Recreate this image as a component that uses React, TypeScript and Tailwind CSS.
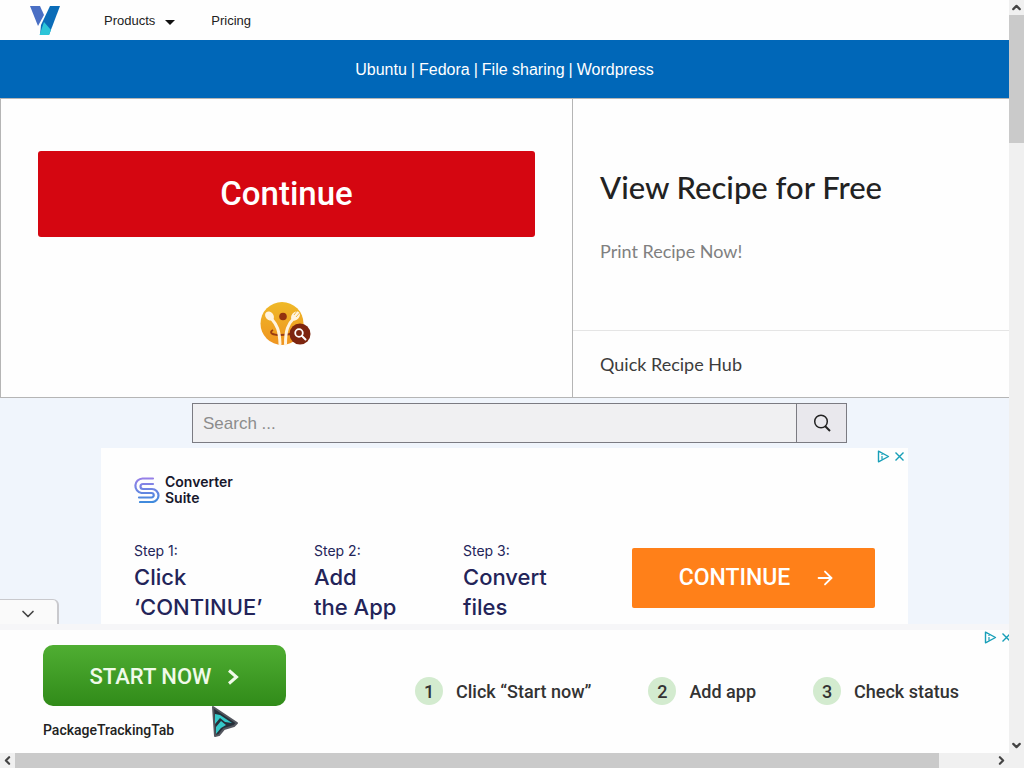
import { ArrowRight, ChevronDown, ChevronLeft, ChevronRight, ChevronUp } from "lucide-react";

const converterSteps = [
  { id: 1, label: "Step 1:", lines: ["Click", "‘CONTINUE’"], width: "w-[180px]" },
  { id: 2, label: "Step 2:", lines: ["Add", "the App"], width: "w-[149px]" },
  { id: 3, label: "Step 3:", lines: ["Convert", "files"], width: "w-[169px]" },
];

const trackingSteps = [
  { id: 1, text: "Click “Start now”" },
  { id: 2, text: "Add app" },
  { id: 3, text: "Check status" },
];

function Logo() {
  return (
    <svg viewBox="0 0 30 29" className="w-[30px] h-[29px]" aria-hidden="true">
      <path d="M0 0h10l4 9-6 11z" fill="#4a6fc4" />
      <path d="M20 0h10L19 29H10l1-10z" fill="#0a6cb8" />
      <path d="M14 16l7 8-2 5H9.500z" fill="#2cc5d8" />
    </svg>
  );
}

function RecipeIcon() {
  return (
    <svg viewBox="0 0 52 46" className="w-[52px] h-[46px]" aria-hidden="true">
      <defs>
        <linearGradient id="plate" x1="0" y1="0" x2="0" y2="1">
          <stop offset="0" stopColor="#efb928" />
          <stop offset="1" stopColor="#ef9420" />
        </linearGradient>
      </defs>
      <circle cx="22" cy="22.500" r="21.5" fill="url(#plate)" />
      <path d="M13 29c-5 3 0 5 7 5 7 0 12-1 14-3" fill="none" stroke="#9a3b10" strokeWidth="1.8" />
      <path d="M11 17c6 7 8.500 12 9 26M34 17c-6 6-8.500 12-8.500 26" fill="none" stroke="#fff4e0" strokeWidth="3" strokeLinecap="round" />
      <ellipse cx="9.500" cy="15" rx="4" ry="5" transform="rotate(-40 9.500 15)" fill="#fff4e0" />
      <ellipse cx="35.500" cy="15" rx="3.800" ry="5.200" transform="rotate(42 35.500 15)" fill="#fff4e0" />
      <path d="M37 10l-3 4M39.500 12l-3.500 4" stroke="#efad26" strokeWidth="0.8" />
      <circle cx="23" cy="15.500" r="3.800" fill="#93320f" />
      <circle cx="40" cy="33" r="10.500" fill="#7d250f" />
      <circle cx="39" cy="32" r="3.800" fill="none" stroke="#fff" strokeWidth="1.800" />
      <path d="M42 35l3.500 3.500" stroke="#fff" strokeWidth="2" strokeLinecap="round" />
    </svg>
  );
}

function ConverterIcon() {
  return (
    <svg viewBox="0 0 26 26" className="w-[26px] h-[26px]" fill="none" strokeWidth="2.200" strokeLinecap="round" aria-hidden="true">
      <defs>
        <linearGradient id="suite" gradientUnits="userSpaceOnUse" x1="0" y1="0" x2="0" y2="26">
          <stop offset="0" stopColor="#9b7fe8" />
          <stop offset="1" stopColor="#3d8bdc" />
        </linearGradient>
      </defs>
      <g stroke="url(#suite)">
        <path d="M19 1.500H8.500a7.300 7.300 0 0 0-1 14.500H15" />
        <path d="M19 7H9a2.500 2.500 0 0 0 0 5h9a6.500 6.500 0 0 1 0 13H6" />
        <path d="M5 20.500h12.500a2.200 2.200 0 0 0 0-4.500H14" />
      </g>
    </svg>
  );
}

function AdChoices() {
  return (
    <div className="flex items-center gap-1 text-[#189fb8]">
      <button aria-label="Ad choices">
        <svg viewBox="0 0 13 13" className="w-[13px] h-[13px]" fill="none" stroke="currentColor">
          <path d="M1.500 1.200v10.600L11.500 6.500z" strokeWidth="1.400" strokeLinejoin="round" />
          <path d="M5 6v3.500M5 4v1" strokeWidth="1.200" />
        </svg>
      </button>
      <button aria-label="Close ad">
        <svg viewBox="0 0 11 11" className="w-[11px] h-[11px]" fill="none" stroke="currentColor" strokeWidth="1.400">
          <path d="M1.500 1.500l8 8M9.500 1.500l-8 8" />
        </svg>
      </button>
    </div>
  );
}

function Header() {
  return (
    <header>
      <nav className="flex items-center h-10 pl-[30px] text-[13px] text-[#222]">
        <a href="#home" aria-label="Home">
          <Logo />
        </a>
        <button className="flex items-center gap-[10px] ml-11 pt-px">
          Products
          <svg viewBox="0 0 10 5" className="w-[10px] h-[5px] mt-1" aria-hidden="true">
            <path d="M0 0h10L5 5z" fill="#111" />
          </svg>
        </button>
        <a href="#pricing" className="ml-9 pt-px">
          Pricing
        </a>
      </nav>
      <div className="flex items-center justify-center gap-1 h-[58px] pt-px bg-[#0067b8] text-white text-base">
        <a href="#ubuntu">Ubuntu</a>|<a href="#fedora">Fedora</a>|
        <a href="#file-sharing">File sharing</a>|<a href="#wordpress">Wordpress</a>
      </div>
    </header>
  );
}

function RecipeAd() {
  return (
    <section className="flex h-[300px] bg-[#fefefe] border-y border-[#b5b5b5]">
      <div className="flex flex-col items-center w-[573px] px-[37px] pt-[52px] border-x border-[#b5b5b5]">
        <button className="w-full h-[86px] rounded-[3px] bg-[#d50611] font-['Roboto',sans-serif] font-medium text-[33px] text-white">
          Continue
        </button>
        <div className="mt-16 pr-[2px]">
          <RecipeIcon />
        </div>
      </div>
      <div className="flex-1 flex flex-col font-['Lato',sans-serif]">
        <div className="flex-1 pl-[27px] pt-[68px] border-b border-[#e5e5e5]">
          <h2 className="text-[31px] leading-10 font-medium text-[#222]">View Recipe for Free</h2>
          <p className="mt-8 text-[18px] leading-6 text-[#808080]">Print Recipe Now!</p>
        </div>
        <p className="flex items-center h-[66px] pl-[27px] text-[18px] text-[#3c3c3c]">Quick Recipe Hub</p>
      </div>
    </section>
  );
}

function SearchBar() {
  return (
    <form className="flex w-[655px] h-10 ml-[192px] border border-[#7b7b82] bg-[#f0f0f2]">
      <input
        type="search"
        aria-label="Search"
        placeholder="Search ..."
        className="flex-1 px-[10px] pt-[2px] text-[17px] outline-none placeholder:text-[#8c8c8c]"
      />
      <button aria-label="Submit search" className="flex items-center justify-center w-[50px] border-l border-[#7b7b82] bg-[#e9e8ed]">
        <svg viewBox="0 0 18 18" className="w-[18px] h-[18px]" fill="none" stroke="#222" strokeWidth="1.500">
          <circle cx="8" cy="7.500" r="6.300" />
          <path d="M12 12l5 5" strokeWidth="2" />
        </svg>
      </button>
    </form>
  );
}

function ConverterAd() {
  return (
    <section className="ml-[101px] mr-[101px] mt-[5px] h-[280px] bg-[#fefefe] font-['Inter',sans-serif]">
      <div className="flex items-start justify-between pl-[33px] pr-[3px]">
        <div className="flex items-center gap-[5px] pt-[26px]">
          <ConverterIcon />
          <p className="text-[14px] leading-4 font-semibold text-[#17172b]">
            Converter
            <br />
            Suite
          </p>
        </div>
        <div className="pt-[2px]">
          <AdChoices />
        </div>
      </div>
      <div className="flex items-start pl-[33px] pt-[35px] text-[#232459]">
        {converterSteps.map((step) => (
          <div key={step.id} className={step.width}>
            <p className="text-[14px] leading-5">{step.label}</p>
            <p className="text-[22px] leading-[30px] font-medium mt-px">
              {step.lines[0]}
              <br />
              {step.lines[1]}
            </p>
          </div>
        ))}
        <button className="flex items-center justify-center gap-6 w-[243px] h-[60px] pl-2 mt-[7px] rounded-[2px] bg-[#ff8019] font-['Roboto',sans-serif] font-medium text-[23px] text-white">
          CONTINUE
          <ArrowRight className="w-[22px] h-[22px]" strokeWidth={2} />
        </button>
      </div>
    </section>
  );
}

function Cursor() {
  return (
    <svg viewBox="0 0 28 33" className="absolute left-[211px] top-[75px] w-[28px] h-[33px]" aria-hidden="true">
      <path d="M2 2l24 16-3 3-10 3-5 6-4 1z" fill="#27303a" stroke="#54575f" strokeWidth="2" strokeLinejoin="round" />
      <path d="M4 9l5 1 12 8-7-1-5-4-5 6z" fill="#35c9c9" />
      <path d="M5 22l5-6 5 4-5 3-5 6z" fill="#35c9c9" />
    </svg>
  );
}

function TrackingAd() {
  return (
    <section className="relative h-[129px] shrink-0 border-t-[6px] border-[#f6f6f8] bg-[#fefefe] font-['Roboto',sans-serif]">
      <button
        aria-label="Hide ad"
        className="absolute left-0 -top-[31px] flex items-center justify-center w-[59px] h-[25px] pt-1 pr-[2px] rounded-tr-md border-t border-r-2 border-[#c9c9cd] bg-[#fafafa]"
      >
        <ChevronDown className="w-5 h-5 text-[#444]" strokeWidth={2} />
      </button>
      <div className="flex items-start pl-[43px] pt-[15px]">
        <div>
          <button className="flex items-center justify-center gap-4 w-[243px] h-[61px] pt-[2px] rounded-[10px] bg-linear-to-b from-[#4fae32] to-[#318b19] font-medium text-[22px] text-[#f0fae9]">
            START NOW
            <svg viewBox="0 0 12 16" className="w-[12px] h-[16px]" fill="none" stroke="currentColor" strokeWidth="3">
              <path d="M2 1.500L9.500 8 2 14.500" />
            </svg>
          </button>
          <p className="mt-[14px] text-[14px] leading-5 font-medium text-[#222]">PackageTrackingTab</p>
        </div>
        <ol className="flex gap-[57px] ml-[129px] mt-8 text-[18px] font-medium text-[#333]">
          {trackingSteps.map((step) => (
            <li key={step.id} className="flex items-center gap-[13px]">
              <span className="flex items-center justify-center w-7 h-7 rounded-full bg-[#d3ebcf]">
                {step.id}
              </span>
              {step.text}
            </li>
          ))}
        </ol>
      </div>
      <div className="absolute -right-[3px] top-px">
        <AdChoices />
      </div>
      <Cursor />
    </section>
  );
}

export default function App() {
  return (
    <div className="flex flex-col h-screen overflow-hidden bg-[#f0f0f0] font-['Liberation_Sans',sans-serif]">
      <div className="flex flex-1 min-h-0">
        <main className="flex flex-col flex-1 min-w-0 overflow-hidden bg-[#fefefe]">
          <Header />
          <RecipeAd />
          <div className="flex-1 min-h-0 overflow-hidden pt-[5px] bg-[#f0f5fc]">
            <SearchBar />
            <ConverterAd />
          </div>
          <TrackingAd />
        </main>
        <div className="flex flex-col items-center w-[15px] text-[#444]">
          <ChevronUp className="w-[13px] h-[15px]" strokeWidth={4} />
          <div className="w-full h-32 bg-[#cacaca]" />
          <ChevronDown className="w-[13px] h-[15px] mt-auto" strokeWidth={4} />
        </div>
      </div>
      <div className="flex items-center h-[15px] shrink-0 pr-[15px] text-[#444]">
        <ChevronLeft className="w-[15px] h-[13px]" strokeWidth={4} />
        <div className="w-[924px] h-full bg-[#cacaca]" />
        <ChevronRight className="w-[15px] h-[13px] ml-auto" strokeWidth={4} />
      </div>
    </div>
  );
}
